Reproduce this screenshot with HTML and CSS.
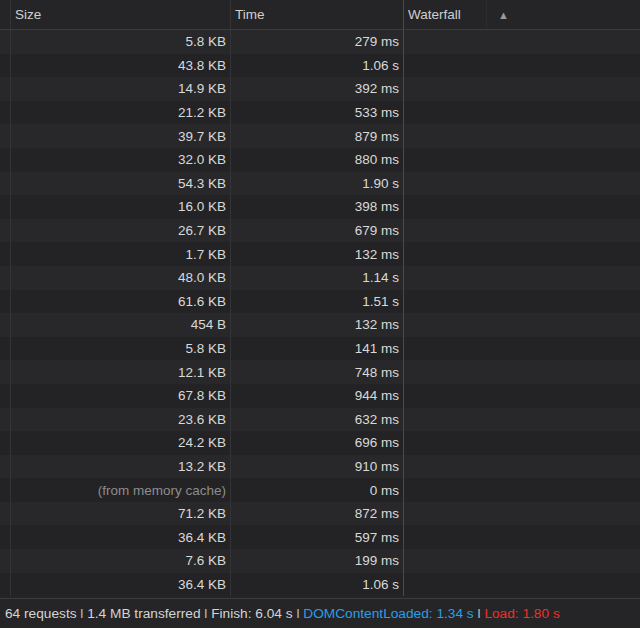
FILE: index.html
```html
<!DOCTYPE html>
<html lang="en">
<head>
    <meta charset="UTF-8">
    <title>Network</title>
    <link rel="stylesheet" href="styles.css">
</head>
<body>
    <div class="panel">
        <div class="grid">
            <div class="row head">
                <div class="cell edge"></div>
                <div class="cell size">Size</div>
                <div class="cell time">Time</div>
                <div class="cell fall">
                    <span class="fall-label">Waterfall</span>
                    <span class="sort">&#9650;</span>
                </div>
            </div>
            <div class="row"><div class="cell edge"></div><div class="cell size num">5.8 KB</div><div class="cell time num">279 ms</div><div class="cell fall"></div></div>
            <div class="row"><div class="cell edge"></div><div class="cell size num">43.8 KB</div><div class="cell time num">1.06 s</div><div class="cell fall"></div></div>
            <div class="row"><div class="cell edge"></div><div class="cell size num">14.9 KB</div><div class="cell time num">392 ms</div><div class="cell fall"></div></div>
            <div class="row"><div class="cell edge"></div><div class="cell size num">21.2 KB</div><div class="cell time num">533 ms</div><div class="cell fall"></div></div>
            <div class="row"><div class="cell edge"></div><div class="cell size num">39.7 KB</div><div class="cell time num">879 ms</div><div class="cell fall"></div></div>
            <div class="row"><div class="cell edge"></div><div class="cell size num">32.0 KB</div><div class="cell time num">880 ms</div><div class="cell fall"></div></div>
            <div class="row"><div class="cell edge"></div><div class="cell size num">54.3 KB</div><div class="cell time num">1.90 s</div><div class="cell fall"></div></div>
            <div class="row"><div class="cell edge"></div><div class="cell size num">16.0 KB</div><div class="cell time num">398 ms</div><div class="cell fall"></div></div>
            <div class="row"><div class="cell edge"></div><div class="cell size num">26.7 KB</div><div class="cell time num">679 ms</div><div class="cell fall"></div></div>
            <div class="row"><div class="cell edge"></div><div class="cell size num">1.7 KB</div><div class="cell time num">132 ms</div><div class="cell fall"></div></div>
            <div class="row"><div class="cell edge"></div><div class="cell size num">48.0 KB</div><div class="cell time num">1.14 s</div><div class="cell fall"></div></div>
            <div class="row"><div class="cell edge"></div><div class="cell size num">61.6 KB</div><div class="cell time num">1.51 s</div><div class="cell fall"></div></div>
            <div class="row"><div class="cell edge"></div><div class="cell size num">454 B</div><div class="cell time num">132 ms</div><div class="cell fall"></div></div>
            <div class="row"><div class="cell edge"></div><div class="cell size num">5.8 KB</div><div class="cell time num">141 ms</div><div class="cell fall"></div></div>
            <div class="row"><div class="cell edge"></div><div class="cell size num">12.1 KB</div><div class="cell time num">748 ms</div><div class="cell fall"></div></div>
            <div class="row"><div class="cell edge"></div><div class="cell size num">67.8 KB</div><div class="cell time num">944 ms</div><div class="cell fall"></div></div>
            <div class="row"><div class="cell edge"></div><div class="cell size num">23.6 KB</div><div class="cell time num">632 ms</div><div class="cell fall"></div></div>
            <div class="row"><div class="cell edge"></div><div class="cell size num">24.2 KB</div><div class="cell time num">696 ms</div><div class="cell fall"></div></div>
            <div class="row"><div class="cell edge"></div><div class="cell size num">13.2 KB</div><div class="cell time num">910 ms</div><div class="cell fall"></div></div>
            <div class="row"><div class="cell edge"></div><div class="cell size num cached">(from memory cache)</div><div class="cell time num">0 ms</div><div class="cell fall"></div></div>
            <div class="row"><div class="cell edge"></div><div class="cell size num">71.2 KB</div><div class="cell time num">872 ms</div><div class="cell fall"></div></div>
            <div class="row"><div class="cell edge"></div><div class="cell size num">36.4 KB</div><div class="cell time num">597 ms</div><div class="cell fall"></div></div>
            <div class="row"><div class="cell edge"></div><div class="cell size num">7.6 KB</div><div class="cell time num">199 ms</div><div class="cell fall"></div></div>
            <div class="row"><div class="cell edge"></div><div class="cell size num">36.4 KB</div><div class="cell time num">1.06 s</div><div class="cell fall"></div></div>
        </div>

        <div class="summary">64 requests <span class="sep">l</span> 1.4 MB transferred <span class="sep">l</span> Finish: 6.04 s <span class="sep">l</span> <span class="dcl">DOMContentLoaded: 1.34 s</span> <span class="sep">l</span> <span class="load">Load: 1.80 s</span></div>
    </div>
</body>
</html>
```

FILE: styles.css
```css
body {
    margin: 0;
    background-color: #242426;
    font-family: "Liberation Sans", Arial, sans-serif;
    font-size: 13.5px;
    color: #d9d9d9;
}

.panel {
    width: 640px;
    height: 628px;
    display: flex;
    flex-direction: column;
    overflow: hidden;
}

.grid {
    flex: 1;
    display: flex;
    flex-direction: column;
}

.row {
    display: flex;
    height: 23.6px;
    background-color: #28282a;
}

.row:nth-child(odd) {
    background-color: #232325;
}

.row.head {
    height: 29px;
    background-color: #252527;
    border-bottom: 1px solid #3c3c3e;
    color: #cfcfcf;
}

.cell {
    display: flex;
    align-items: center;
    box-sizing: border-box;
}

.edge {
    width: 11px;
    border-right: 1px solid #343436;
}

.size {
    width: 220px;
    padding: 0 4px;
    border-right: 1px solid #343436;
}

.time {
    width: 173px;
    padding: 0 4px;
    border-right: 1px solid #4a4a4c;
}

.fall {
    flex: 1;
}

.num {
    justify-content: flex-end;
}

.cached {
    color: #8c8c8c;
}

.fall-label {
    width: 78px;
    height: 100%;
    padding-left: 4px;
    display: flex;
    align-items: center;
    border-right: 1px solid #2c2c2e;
}

.sort {
    margin-left: 11px;
    font-size: 11px;
    color: #9a9a9a;
}

.summary {
    height: 29px;
    line-height: 29px;
    border-top: 1px solid #3c3c3e;
    background-color: #252527;
    padding-left: 5px;
    white-space: nowrap;
    color: #d4d4d4;
    font-size: 13.7px;
}

.sep {
    color: #bdbdbd;
}

.dcl {
    color: #2a9ee6;
}

.load {
    color: #e8332b;
}
```
